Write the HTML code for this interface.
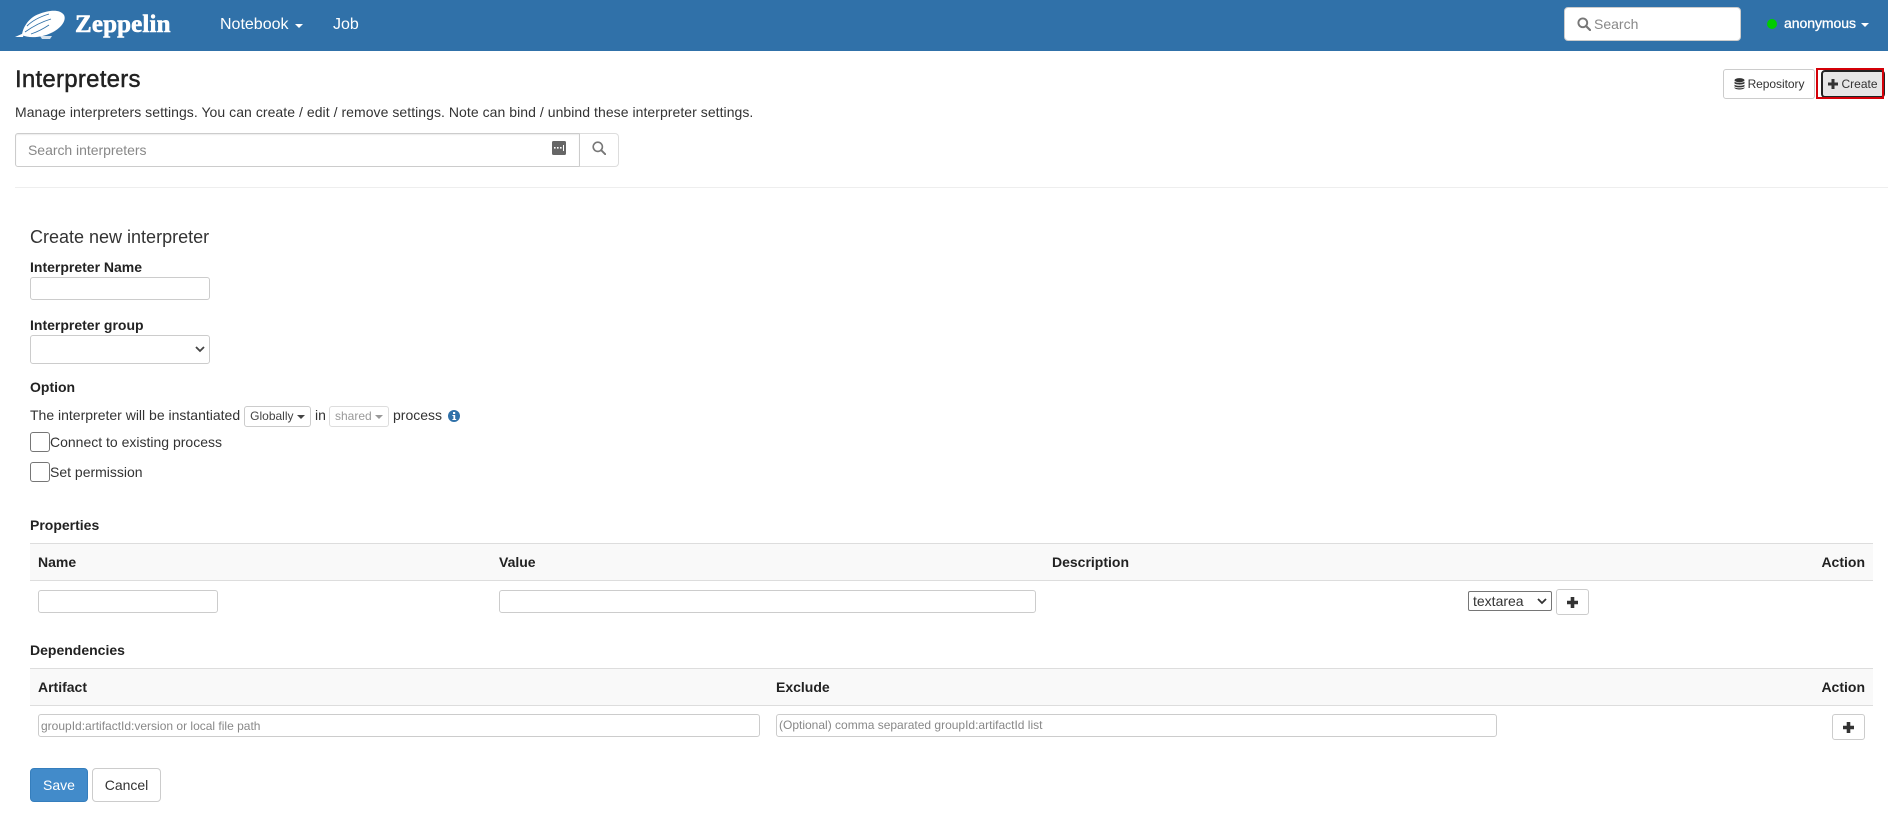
<!DOCTYPE html>
<html lang="en"><head><meta charset="utf-8"><title>Zeppelin</title>
<style>
html,body{margin:0;padding:0;background:#fff;width:1888px;height:818px;overflow:hidden;font-family:"Liberation Sans",Arial,sans-serif;font-size:14px;color:#333}
*{box-sizing:border-box}
.a{position:absolute}
.t{position:absolute;white-space:nowrap;line-height:20px;height:20px}
.b{font-weight:bold;color:#222}
.i{position:absolute;background:#fff;border:1px solid #ccc;border-radius:3px}
.btn{position:absolute;background:#fff;border:1px solid #ccc;border-radius:3px;display:flex;align-items:center;justify-content:center;white-space:nowrap}
.caret{display:inline-block;width:0;height:0;border-top:4px solid currentColor;border-left:4px solid transparent;border-right:4px solid transparent;vertical-align:middle}
.head{position:absolute;left:30px;width:1843px;height:38px;background:#f9f9f9;border-top:1px solid #ddd;border-bottom:1px solid #ddd}
</style></head>
<body>
<div class="a" style="left:0;top:0;width:1888px;height:51px;background:#3071a9"></div>
<svg class="a" style="left:13px;top:6px" width="56" height="36" viewBox="0 0 56 36">
<path d="M9 29C10 20 17 11 26 8C36 4 47 3 51 9C54 15 47 23 38 27C30 31 17 33 9 29Z" fill="#fff"/>
<path d="M2 31L11 27L10 31Z" fill="#fff"/>
<path d="M27 30h12l-2 3h-8z" fill="#fff" opacity=".8"/>
<g fill="none" stroke="#3071a9" stroke-width=".9">
<path d="M14 20C19 15 26 11 36 8"/>
<path d="M12 26C19 21 28 16 38 13"/>
<path d="M18 28C24 26 30 23 36 19"/>
</g>
</svg>
<div class="t" style="left:75px;top:11px;font-family:'Liberation Serif',serif;font-weight:bold;font-size:25px;line-height:28px;height:28px;color:#fff;-webkit-text-stroke:.6px #fff;letter-spacing:.15px">Zeppelin</div>
<div class="t" style="left:220px;top:15px;font-size:16px;color:#fff;line-height:20px">Notebook</div>
<span class="caret a" style="left:295px;top:24px;color:#fff"></span>
<div class="t" style="left:333px;top:15px;font-size:16px;color:#fff">Job</div>
<div class="a" style="left:1564px;top:7px;width:177px;height:34px;background:#fff;border:1px solid #ccc;border-radius:4px"></div>
<svg class="a" style="left:1577px;top:17px" width="14" height="14" viewBox="0 0 14 14"><circle cx="5.8" cy="5.8" r="4.4" fill="none" stroke="#777" stroke-width="1.9"/><path d="M9 9l4 4" stroke="#777" stroke-width="2.2" stroke-linecap="round"/></svg>
<div class="t" style="left:1594px;top:14px;color:#888">Search</div>
<div class="a" style="left:1767px;top:19px;width:10px;height:10px;border-radius:50%;background:#0c0"></div>
<div class="t" style="left:1784px;top:13px;color:#fff;-webkit-text-stroke:.3px #fff;letter-spacing:-.05px">anonymous</div>
<span class="caret a" style="left:1861px;top:23px;color:#fff"></span>

<div class="t" style="left:15px;top:66px;font-size:24px;line-height:28px;height:28px;color:#222;-webkit-text-stroke:.45px #222;letter-spacing:.25px">Interpreters</div>
<div class="t" style="left:15px;top:102px;color:#333;font-size:14px;letter-spacing:.05px">Manage interpreters settings. You can create / edit / remove settings. Note can bind / unbind these interpreter settings.</div>

<div class="btn" style="left:1723px;top:69px;width:92px;height:30px;font-size:12px;letter-spacing:-.05px"><svg width="11" height="12" viewBox="0 0 11 12" style="margin-right:3px"><ellipse cx="5.5" cy="2.2" rx="5" ry="2.1" fill="#333"/><path d="M.5 3.6C2 5.2 9 5.2 10.5 3.6V5.4C9 7 2 7 .5 5.4ZM.5 6.6C2 8.2 9 8.2 10.5 6.6V8.2C9 9.8 2 9.8 .5 8.2ZM.5 9.2C2 10.6 9 10.6 10.5 9.2V10C9 12 2 12 .5 10Z" fill="#333"/></svg>Repository</div>
<div class="btn" style="left:1821px;top:70px;width:64px;height:28px;font-size:12px;background:#e6e6e6;border:2px solid #222;border-radius:4px"><svg width="10" height="10" viewBox="0 0 10 10" style="margin-right:3px"><path d="M3.5 0h3v3.5H10v3H6.500V10h-3V6.500H0v-3h3.500Z" fill="#333"/></svg>Create</div>
<div class="a" style="left:1816px;top:68px;width:68px;height:31px;border:2px solid #d40008"></div>

<div class="a" style="left:15px;top:133px;width:565px;height:34px;border:1px solid #ccc;border-radius:3px 0 0 3px;box-shadow:inset 0 1px 1px rgba(0,0,0,.075)"></div>
<div class="a" style="left:579px;top:133px;width:40px;height:34px;border:1px solid #ddd;border-left-color:#ccc;border-radius:0 4px 4px 0"></div>
<div class="t" style="left:28px;top:140px;color:#888;letter-spacing:-.03px">Search interpreters</div>
<svg class="a" style="left:552px;top:141px" width="14" height="14" viewBox="0 0 14 14"><rect width="14" height="14" y="0" rx="1.5" fill="#666"/><rect x="2" y="6" width="1.6" height="1.6" fill="#fff"/><rect x="5" y="6" width="1.6" height="1.6" fill="#fff"/><rect x="8" y="6" width="1.6" height="1.6" fill="#fff"/><rect x="11" y="4" width="1" height="6" fill="#fff"/></svg>
<svg class="a" style="left:592px;top:141px" width="14" height="14" viewBox="0 0 14 14"><circle cx="5.8" cy="5.8" r="4.6" fill="none" stroke="#777" stroke-width="1.6"/><path d="M9.2 9.2l4 4" stroke="#777" stroke-width="1.9" stroke-linecap="round"/></svg>
<div class="a" style="left:15px;top:187px;width:1873px;height:1px;background:#eee"></div>

<div class="t" style="left:30px;top:226px;font-size:18px;line-height:22px;height:22px;color:#333">Create new interpreter</div>
<div class="t b" style="left:30px;top:257px">Interpreter Name</div>
<div class="i" style="left:30px;top:277px;width:180px;height:23px"></div>
<div class="t b" style="left:30px;top:315px">Interpreter group</div>
<div class="i" style="left:30px;top:335px;width:180px;height:29px"></div>
<svg class="a" style="left:195px;top:346px" width="10" height="7" viewBox="0 0 10 7"><path d="M1 1l4 4 4-4" fill="none" stroke="#444" stroke-width="1.8"/></svg>
<div class="t b" style="left:30px;top:377px">Option</div>
<div class="t" style="left:30px;top:405px">The interpreter will be instantiated</div>
<div class="btn" style="left:244px;top:406px;width:67px;height:21px;font-size:12px;color:#444;padding-bottom:2px">Globally&nbsp;<span class="caret" style="margin-top:2px"></span></div>
<div class="t" style="left:315px;top:405px">in</div>
<div class="btn" style="left:329px;top:406px;width:60px;height:21px;font-size:12px;color:#999;border-color:#ddd;padding-bottom:2px">shared&nbsp;<span class="caret" style="margin-top:2px"></span></div>
<div class="t" style="left:393px;top:405px">process</div>
<svg class="a" style="left:448px;top:410px" width="12" height="12" viewBox="0 0 12 12"><circle cx="6" cy="6" r="6" fill="#3071a9"/><rect x="5" y="2" width="2.2" height="2" fill="#fff"/><path d="M4.4 5h2.8v4h1v1H4.4V9h1V6h-1Z" fill="#fff"/></svg>
<div class="a" style="left:30px;top:432px;width:20px;height:20px;border:1px solid #767676;border-radius:3px;background:#fff"></div>
<div class="t" style="left:50px;top:432px">Connect to existing process</div>
<div class="a" style="left:30px;top:462px;width:20px;height:20px;border:1px solid #767676;border-radius:3px;background:#fff"></div>
<div class="t" style="left:50px;top:462px">Set permission</div>

<div class="t b" style="left:30px;top:515px">Properties</div>
<div class="head" style="top:543px"></div>
<div class="t b" style="left:38px;top:552px">Name</div>
<div class="t b" style="left:499px;top:552px">Value</div>
<div class="t b" style="left:1052px;top:552px">Description</div>
<div class="t b" style="left:1821px;top:552px;width:44px;text-align:right">Action</div>
<div class="i" style="left:38px;top:590px;width:180px;height:23px"></div>
<div class="i" style="left:499px;top:590px;width:537px;height:23px"></div>
<div class="a" style="left:1468px;top:591px;width:84px;height:20px;border:1px solid #767676;border-radius:2px;background:#fff"></div>
<div class="t" style="left:1473px;top:591px;color:#333">textarea</div>
<svg class="a" style="left:1537px;top:598px" width="10" height="7" viewBox="0 0 10 7"><path d="M1 1l4 4 4-4" fill="none" stroke="#333" stroke-width="1.8"/></svg>
<div class="btn" style="left:1556px;top:589px;width:33px;height:26px"><svg width="11" height="11" viewBox="0 0 11 11"><path d="M3.700 0h3.600v3.700H11v3.600H7.300V11H3.700V7.300H0V3.700h3.700Z" fill="#333"/></svg></div>

<div class="t b" style="left:30px;top:640px">Dependencies</div>
<div class="head" style="top:668px"></div>
<div class="t b" style="left:38px;top:677px">Artifact</div>
<div class="t b" style="left:776px;top:677px">Exclude</div>
<div class="t b" style="left:1821px;top:677px;width:44px;text-align:right">Action</div>
<div class="i" style="left:38px;top:714px;width:722px;height:23px"></div>
<div class="t" style="left:41px;top:716px;font-size:12px;color:#888">groupId:artifactId:version or local file path</div>
<div class="i" style="left:776px;top:714px;width:721px;height:23px"></div>
<div class="t" style="left:779px;top:715px;font-size:12px;color:#888">(Optional) comma separated groupId:artifactId list</div>
<div class="btn" style="left:1832px;top:714px;width:33px;height:26px"><svg width="11" height="11" viewBox="0 0 11 11"><path d="M3.700 0h3.600v3.700H11v3.600H7.300V11H3.700V7.300H0V3.700h3.700Z" fill="#333"/></svg></div>

<div class="btn" style="left:30px;top:768px;width:58px;height:34px;background:#428bca;border-color:#357ebd;color:#fff;border-radius:4px">Save</div>
<div class="btn" style="left:92px;top:768px;width:69px;height:34px;border-radius:4px">Cancel</div>
</body></html>
